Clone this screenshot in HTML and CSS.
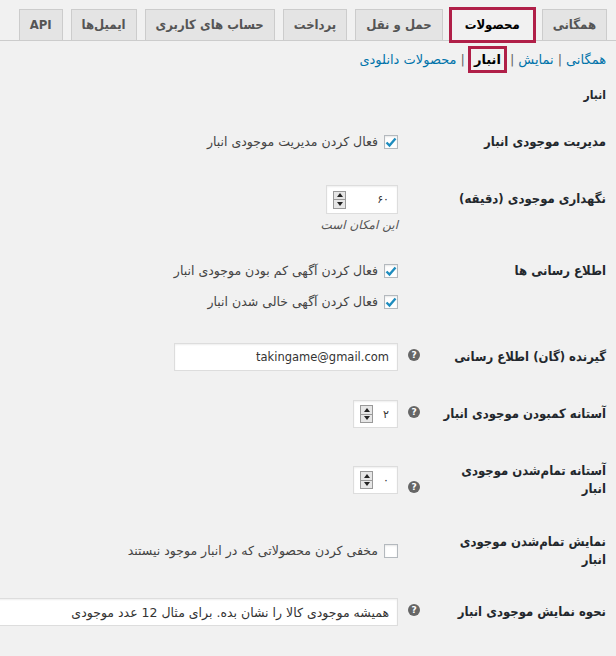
FILE: index.html
```html
<!DOCTYPE html>
<html lang="fa" dir="rtl">
<head>
  <meta charset="UTF-8">
  <title>تنظیمات محصولات - انبار</title>
  <link rel="stylesheet" href="styles.css">
</head>
<body>
  <nav class="tabs">
    <a class="tab" href="#">همگانی</a>
    <a class="tab active" href="#">محصولات</a>
    <a class="tab" href="#">حمل و نقل</a>
    <a class="tab" href="#">پرداخت</a>
    <a class="tab" href="#">حساب های کاربری</a>
    <a class="tab" href="#">ایمیل‌ها</a>
    <a class="tab" href="#">API</a>
  </nav>

  <ul class="subnav">
    <li><a href="#">همگانی</a><span class="sep">|</span></li>
    <li><a href="#">نمایش</a><span class="sep">|</span></li>
    <li><a class="current">انبار</a><span class="sep">|</span></li>
    <li><a href="#">محصولات دانلودی</a></li>
  </ul>

  <h2 class="section-title">انبار</h2>

  <div class="settings">
    <div class="row row-manage">
      <div class="row-label"><span class="label-text">مدیریت موجودی انبار</span></div>
      <div class="row-field check-field">
        <label class="check"><span class="box"><svg viewBox="0 0 14 14"><path d="M2.5 7.5 L5.5 10.5 L11.5 3.5"/></svg></span>فعال کردن مدیریت موجودی انبار</label>
      </div>
    </div>

    <div class="row row-hold">
      <div class="row-label"><span class="label-text">نگهداری موجودی (دقیقه)</span></div>
      <div class="row-field">
        <div class="number wide"><span class="value">۶۰</span><span class="spin"><i class="up"></i><i class="down"></i></span></div>
        <p class="desc">این امکان است</p>
      </div>
    </div>

    <div class="row row-notify">
      <div class="row-label"><span class="label-text">اطلاع رسانی ها</span></div>
      <div class="row-field check-field">
        <label class="check"><span class="box"><svg viewBox="0 0 14 14"><path d="M2.5 7.5 L5.5 10.5 L11.5 3.5"/></svg></span>فعال کردن آگهی کم بودن موجودی انبار</label>
        <label class="check"><span class="box"><svg viewBox="0 0 14 14"><path d="M2.5 7.5 L5.5 10.5 L11.5 3.5"/></svg></span>فعال کردن آگهی خالی شدن انبار</label>
      </div>
    </div>

    <div class="row row-recipient">
      <div class="row-label"><span class="label-text">گیرنده (گان) اطلاع رسانی</span><span class="help">?</span></div>
      <div class="row-field">
        <div class="text-input email">takingame@gmail.com</div>
      </div>
    </div>

    <div class="row row-low">
      <div class="row-label"><span class="label-text">آستانه کمبودن موجودی انبار</span><span class="help">?</span></div>
      <div class="row-field">
        <div class="number"><span class="value">۲</span><span class="spin"><i class="up"></i><i class="down"></i></span></div>
      </div>
    </div>

    <div class="row row-out centered">
      <div class="row-label"><span class="label-text">آستانه تمام‌شدن موجودی انبار</span><span class="help">?</span></div>
      <div class="row-field">
        <div class="number"><span class="value">۰</span><span class="spin"><i class="up"></i><i class="down"></i></span></div>
      </div>
    </div>

    <div class="row row-hide centered">
      <div class="row-label"><span class="label-text">نمایش تمام‌شدن موجودی انبار</span></div>
      <div class="row-field check-field">
        <label class="check"><span class="box"></span>مخفی کردن محصولاتی که در انبار موجود نیستند</label>
      </div>
    </div>

    <div class="row row-format">
      <div class="row-label"><span class="label-text">نحوه نمایش موجودی انبار</span><span class="help">?</span></div>
      <div class="row-field">
        <div class="text-input long">همیشه موجودی کالا را نشان بده. برای مثال 12 عدد موجودی</div>
      </div>
    </div>
  </div>
</body>
</html>
```

FILE: styles.css
```css
body {
  margin: 0;
  padding: 0 10px 0 0;
  background: #f1f1f1;
  color: #444;
  font-family: "DejaVu Sans", sans-serif;
  font-size: 12px;
  overflow: hidden;
}
a {
  text-decoration: none;
}

/* tabs */
.tabs {
  display: flex;
  gap: 8px;
  padding-top: 9px;
  margin-right: -10px;
  padding-right: 9px;
  border-bottom: 1px solid #ccc;
}
.tab {
  display: block;
  white-space: nowrap;
  padding: 5px 10px;
  line-height: 20px;
  font-family: "DejaVu Sans Condensed", "DejaVu Sans", sans-serif;
  font-size: 13px;
  font-weight: bold;
  color: #555;
  background: #e4e4e4;
  border: 1px solid #ccc;
  border-bottom: none;
}
.tab.active {
  background: #f1f1f1;
  color: #000;
  padding: 5px 13px 6px;
  outline: 3px solid #b01f48;
  outline-offset: -1px;
  margin-bottom: -1px;
}

/* sub navigation */
.subnav {
  list-style: none;
  margin: 6px 0 0;
  padding: 0;
  display: flex;
  font-size: 13px;
  line-height: 25px;
}
.subnav a {
  color: #0073aa;
}
.subnav .sep {
  color: #666;
  margin: 0 4px;
}
.subnav .current {
  color: #000;
  font-weight: bold;
  padding: 0 5px;
  outline: 3px solid #b01f48;
  outline-offset: -2px;
  display: inline-block;
}

.section-title {
  font-family: "DejaVu Sans Condensed", "DejaVu Sans", sans-serif;
  font-size: 12px;
  font-weight: bold;
  color: #23282d;
  margin: 14px 0 10px;
  line-height: 18px;
}

/* settings rows */
.row {
  display: flex;
  align-items: flex-start;
  padding: 14px 0;
}
.row.centered {
  align-items: center;
}
.row-hold { padding: 15px 0 9px; }
.row-notify { padding-bottom: 13px; }
.row-low { padding-top: 15px; }
.row-out { padding: 15px 0 11px; }
.row-hide { padding-bottom: 10px; }

.row-label {
  width: 208px;
  flex-shrink: 0;
  box-sizing: border-box;
  padding: 5px 0 5px 10px;
  display: flex;
  justify-content: space-between;
  font-family: "DejaVu Sans Condensed", "DejaVu Sans", sans-serif;
  font-size: 13px;
  font-weight: bold;
  color: #23282d;
  line-height: 18px;
}
.label-text {
  max-width: 172px;
}
.help {
  align-self: flex-end;
  margin: 0 2px 5px 0;
  width: 12px;
  height: 12px;
  border-radius: 50%;
  background: #666;
  color: #fff;
  font-size: 9px;
  font-weight: bold;
  line-height: 12px;
  text-align: center;
  font-family: "DejaVu Sans", sans-serif;
}
.row-field {
  flex: 1;
  min-width: 0;
}
.check-field {
  padding: 5px 0;
  display: flex;
  flex-direction: column;
  gap: 13px;
}

.check {
  display: flex;
  align-items: center;
  gap: 6px;
  line-height: 18px;
  font-size: 12.5px;
}
.box {
  width: 14px;
  height: 14px;
  box-sizing: border-box;
  border: 1px solid #b4b9be;
  background: #fff;
  box-shadow: inset 0 1px 2px rgba(0,0,0,.1);
  display: flex;
}
.box svg {
  width: 14px;
  height: 14px;
  margin: -1px;
}
.box path {
  fill: none;
  stroke: #1e8cbe;
  stroke-width: 2.4;
}

.number, .text-input {
  height: 28px;
  box-sizing: border-box;
  background: #fff;
  border: 1px solid #ddd;
  box-shadow: inset 0 1px 2px rgba(0,0,0,.07);
  display: flex;
  align-items: center;
  padding: 0 8px;
}
.number {
  width: 45px;
  justify-content: space-between;
  padding: 0 8px 0 6px;
}
.number.wide {
  width: 72px;
  height: 29px;
}
.number .value {
  font-size: 11px;
  color: #333;
}
.spin {
  width: 11px;
  height: 16px;
  border: 1px solid #999;
  background: #e6e6e6;
  display: flex;
  flex-direction: column;
}
.spin i {
  flex: 1;
  display: flex;
  align-items: center;
  justify-content: center;
}
.spin .up {
  border-bottom: 1px solid #999;
}
.spin .up::before, .spin .down::before {
  content: "";
  border-left: 3px solid transparent;
  border-right: 3px solid transparent;
}
.spin .up::before {
  border-bottom: 4px solid #222;
}
.spin .down::before {
  border-top: 4px solid #222;
}

.desc {
  margin: 2px 0 0;
  font-style: italic;
  color: #555;
  font-size: 12px;
  line-height: 18px;
}

.text-input {
  color: #333;
  font-size: 12.5px;
}
.email {
  width: 224px;
  font-size: 11.5px;
}
.long {
  width: 420px;
}
```
